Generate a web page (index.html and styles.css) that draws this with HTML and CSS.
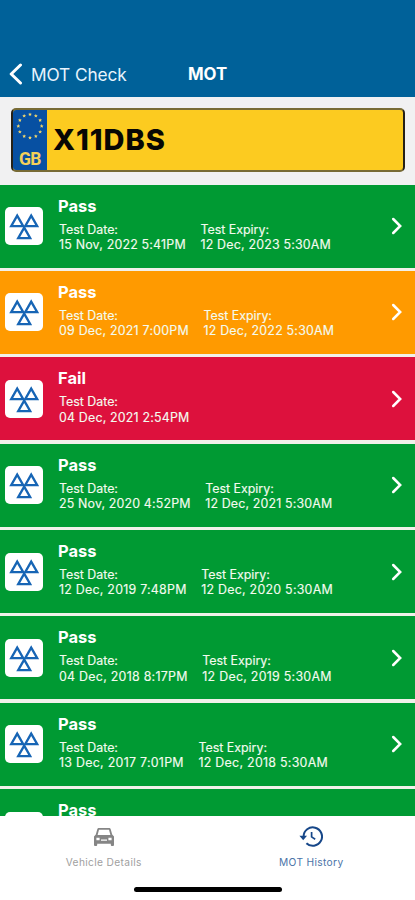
FILE: index.html
```
<!DOCTYPE html>
<html lang="en">
<head>
<meta charset="utf-8">
<title>MOT History</title>
<link rel="stylesheet" href="styles.css">
</head>
<body>
<svg class="defs" width="0" height="0" aria-hidden="true">
  <symbol id="mot" viewBox="0 0 38 38"><path d="M12.2 8.6 6.2 19.2H18.2ZM26.2 8.6 20.2 19.2H32.2ZM19.2 20.6 13.2 31.2H25.2Z" fill="none" stroke="#1765b5" stroke-width="2.3"/></symbol>
  <symbol id="chev" viewBox="0 0 12 18"><path d="M2.2 2 9.2 9 2.2 16" fill="none" stroke="#fff" stroke-width="2.5" stroke-linecap="round"/></symbol>
  <symbol id="star" viewBox="-2 -2 4 4"><path d="M0-1.9 .6-.6 1.9-.6 .9.4 1.2 1.7 0 1-1.2 1.7-.9.4-1.9-.6-.6-.6Z" fill="#f3d66b"/></symbol>
</svg>
<div class="screen">
  <header class="nav">
    <div class="back"><svg width="14" height="22" viewBox="0 0 14 22"><path d="M11.5 2 2.2 11 11.5 20" fill="none" stroke="#fff" stroke-width="3" stroke-linecap="round" stroke-linejoin="round"/></svg><span>MOT Check</span></div>
    <h1>MOT</h1>
  </header>
  <div class="plate-area">
    <div class="plate">
      <div class="band">
        <svg width="30" height="30" viewBox="-15 -15 30 30"><g id="stars"></g></svg>
        <span>GB</span>
      </div>
      <span class="reg">X11DBS</span>
    </div>
  </div>
  <main id="list" class="list"></main>
  <footer class="tabs">
    <div class="tab"><svg width="24" height="24" viewBox="0 0 24 24"><path fill="#858585" fill-rule="evenodd" d="M18.8 4.4C18.5 3.4 17.8 3 16.8 3H7.2C6.2 3 5.5 3.4 5.2 4.4L3.8 9.6 2 11.5V20Q2 21 3 21H4.2Q5.2 21 5.2 20V18.7H18.8V20Q18.8 21 19.8 21H21Q22 21 22 20V11.5L20.2 9.6ZM7 4.7H17L18.4 10H5.6ZM4.4 12.8H7.6V15.2H4.4ZM16.4 12.8H19.6V15.2H16.4ZM9 14.6H15V15.8H9Z"/></svg><span>Vehicle Details</span></div>
    <div class="tab active"><svg width="24" height="24" viewBox="0 0 24 24"><g fill="none" stroke="#174789" stroke-width="2"><path d="M4.6 11.6A9.2 9.2 0 1 1 7.4 18.2"/><path d="M12.6 7V11.9L16.2 14.2" stroke-width="1.7"/></g><path d="M.4 10.8H8L4.2 15.2Z" fill="#174789"/></svg><span>MOT History</span></div>
    <div class="home"></div>
  </footer>
</div>
<script src="app.js"></script>
</body>
</html>
```
FILE: styles.css
```
* { box-sizing: border-box; }
body { margin: 0; font-family: Inter, sans-serif; background: #fff; }
.defs { position: absolute; }
.screen { width: 415px; height: 900px; display: flex; flex-direction: column; overflow: hidden; }
.nav { height: 97px; flex: none; background: #006199; color: #fff; display: grid; grid-template-columns: 1fr auto 1fr; align-items: end; padding: 0 9px 11px; }
.back { display: flex; align-items: center; gap: 8px; height: 24px; font-size: 17.3px; letter-spacing: -.1px; color: #e9f4fd; white-space: nowrap; }
.nav h1 { margin: 0; font-size: 16.8px; line-height: 24px; font-weight: 700; }
.plate-area { height: 87.5px; flex: none; background: #f1f1f2; padding: 11px 10px 0 11px; }
.plate { height: 64px; border: 2px solid #262116; border-top-color: #786b35; border-bottom-color: #786b35; border-radius: 5px; background: #fccb20; display: flex; overflow: hidden; }
.band { width: 34px; background: #0750a2; display: flex; flex-direction: column; align-items: center; color: #f3d15a; }
.band span { font: 700 17.5px/19px "Roboto", sans-serif; margin-top: 10px; letter-spacing: -.5px; }
.reg { font-size: 29px; line-height: 59px; font-weight: 800; letter-spacing: .95px; margin-left: 6px; color: #080704; }
.list { flex: 1; min-height: 0; overflow: hidden; background: #f1f1ea; display: flex; flex-direction: column; gap: 3.4px; }
.row { height: 83px; flex: none; display: flex; align-items: center; padding: 0 12px 0 5.4px; color: #fff; background: #009a33; }
.row.advisory { background: #ff9a00; }
.row.fail { background: #dd113d; }
.badge { width: 38px; height: 38px; border-radius: 5px; background: #fff; flex: none; }
.info { margin-left: 14.6px; flex: 1; height: 100%; padding-top: 11px; }
.info h2 { margin: 0; font-size: 16.5px; line-height: 20px; font-weight: 700; }
.dates { display: flex; gap: 14.6px; margin: 6px 0 0 1px; font-size: 12.4px; line-height: 15.4px; white-space: nowrap; color: #f4fbef; -webkit-text-stroke: .15px #f4fbef; }
.dates div div { letter-spacing: var(--track); }
.tabs { height: 84px; flex: none; background: #fff; display: grid; grid-template-columns: 1fr 1fr; grid-template-rows: 71px auto; }
.tab { display: flex; flex-direction: column; align-items: center; padding-top: 9px; font-size: 10.2px; color: #a0a0a0; letter-spacing: .35px; }
.tab span { line-height: 14px; margin-top: 6px; }
.tab.active { color: #4b74a8; }
.home { grid-column: 1 / 3; justify-self: center; width: 148px; height: 5px; border-radius: 3px; background: #000; }
```
FILE: app.js
```
const tests = [
  ["Pass", "", "15 Nov, 2022 5:41PM", "12 Dec, 2023 5:30AM", .2],
  ["Pass", "advisory", "09 Dec, 2021 7:00PM", "12 Dec, 2022 5:30AM", .22],
  ["Fail", "fail", "04 Dec, 2021 2:54PM", "", .19],
  ["Pass", "", "25 Nov, 2020 4:52PM", "12 Dec, 2021 5:30AM", .16],
  ["Pass", "", "12 Dec, 2019 7:48PM", "12 Dec, 2020 5:30AM", .25],
  ["Pass", "", "04 Dec, 2018 8:17PM", "12 Dec, 2019 5:30AM", .27],
  ["Pass", "", "13 Dec, 2017 7:01PM", "12 Dec, 2018 5:30AM", .28],
  ["Pass", "", "", "", 0]
];
const cell = (label, value) => value ? `<div>${label}<div>${value}</div></div>` : "";
document.getElementById("list").innerHTML = tests.map(([result, kind, date, expiry, track]) => `
  <section class="row ${kind}">
    <svg class="badge"><use href="#mot"/></svg>
    <div class="info"><h2>${result}</h2><div class="dates" style="--track:${track}px">${cell("Test Date:", date)}${cell("Test Expiry:", expiry)}</div></div>
    <svg width="12" height="18"><use href="#chev"/></svg>
  </section>`).join("");
document.getElementById("stars").innerHTML = Array.from({ length: 12 }, (_, i) => {
  const a = i * Math.PI / 6;
  return `<use href="#star" x="${(Math.sin(a) * 11.7 - 2).toFixed(2)}" y="${(1 - Math.cos(a) * 11.7 - 2).toFixed(2)}" width="4" height="4"/>`;
}).join("");
```
